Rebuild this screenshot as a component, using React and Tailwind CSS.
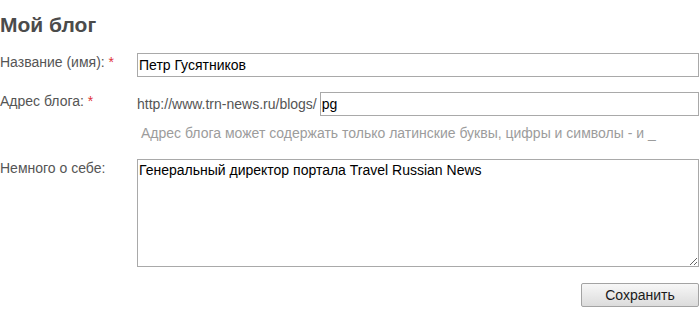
import React from 'react';

const Label = ({ children, required }) => (
  <div className="pt-[1px] text-[14px] leading-4 text-[#555]">
    {children}
    {required && <span className="text-[#e0313a]"> *</span>}
  </div>
);

const App = () => {
  return (
    <div className="w-[699px] bg-white font-['Liberation_Sans',Arial,sans-serif]">
      <h1 className="mt-[13px] text-[21px] font-bold leading-[24px] text-[#4b4b4b]">Мой блог</h1>

      <form className="mt-[16px] flex flex-col">
        <div className="grid grid-cols-[137px_1fr]">
          <Label required>Название (имя):</Label>
          <input
            type="text"
            defaultValue="Петр Гусятников"
            className="h-[24px] w-full border border-[#a9a9a9] px-[1px] text-[14px] text-black outline-none"
          />
        </div>

        <div className="mt-[15px] grid grid-cols-[137px_1fr]">
          <Label required>Адрес блога:</Label>
          <div className="flex items-center gap-[3px]">
            <span className="text-[14px] leading-4 text-[#555]">http://www.trn-news.ru/blogs/</span>
            <input
              type="text"
              defaultValue="pg"
              className="h-[24px] flex-1 border border-[#a9a9a9] px-[1px] text-[14px] text-black outline-none"
            />
          </div>
        </div>

        <div className="mt-[9px] grid grid-cols-[137px_1fr]">
          <div />
          <p className="pl-[4px] text-[14px] leading-4 text-[#9c9c9c]">
            Адрес блога может содержать только латинские буквы, цифры и символы - и _
          </p>
        </div>

        <div className="mt-[18px] grid grid-cols-[137px_1fr]">
          <Label>Немного о себе:</Label>
          <textarea
            defaultValue="Генеральный директор портала Travel Russian News"
            className="h-[108px] w-full border border-[#a9a9a9] px-[1px] pt-[2px] text-[14px] leading-[16px] text-black outline-none"
          />
        </div>

        <div className="mt-[16px] flex justify-end">
          <button
            type="button"
            className="h-[24px] w-[118px] rounded-[2px] border border-[#a3a3a3] bg-gradient-to-b from-[#f7f7f7] to-[#dcdcdc] text-[14px] text-[#1a1a1a]"
          >
            Сохранить
          </button>
        </div>
      </form>
    </div>
  );
};

export default App;
